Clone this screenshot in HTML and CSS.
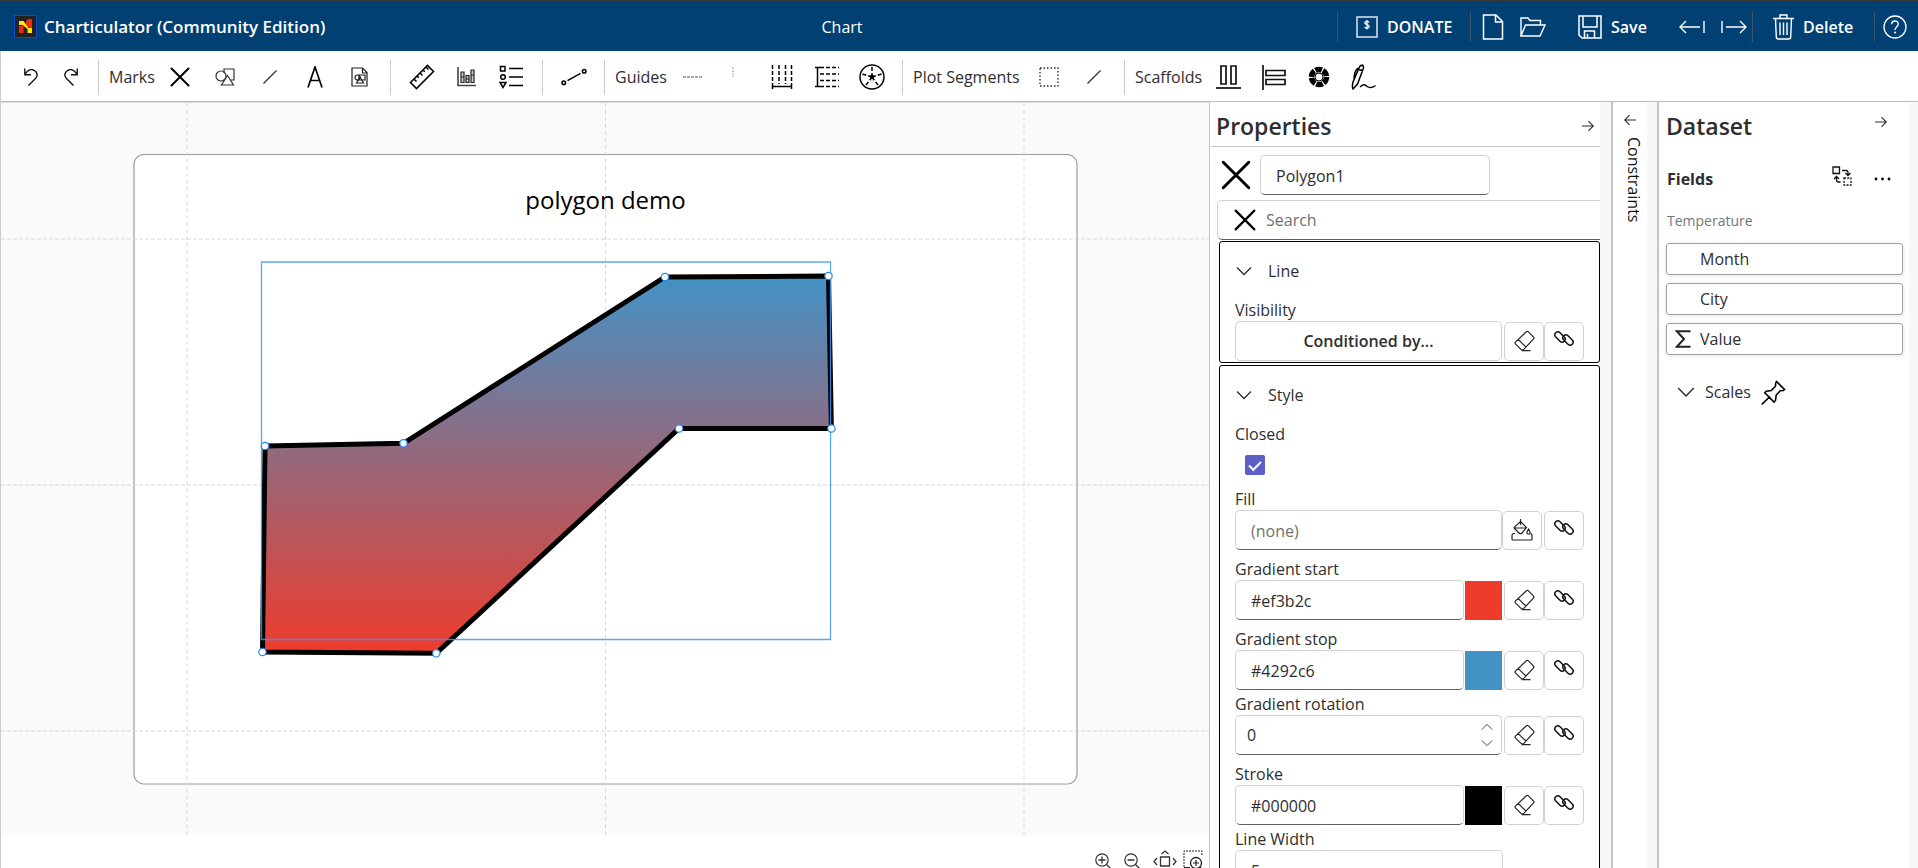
FILE: index.html
```html
<!DOCTYPE html>
<html lang="en">
<head>
<meta charset="utf-8">
<title>Charticulator (Community Edition)</title>
<link rel="stylesheet" href="styles.css">
</head>
<body>
<svg class="sprite" aria-hidden="true">
  <symbol id="cross" viewBox="0 0 20 20"><path d="M1.500 1.500l17 17M18.500 1.500l-17 17" fill="none" stroke="#000" stroke-width="2" stroke-linecap="round"/></symbol>
  <symbol id="chevron" viewBox="0 0 16 16"><path d="M1 4.500l7 7 7-7" fill="none" stroke="currentColor" stroke-width="1.300"/></symbol>
  <symbol id="arrow" viewBox="0 0 12 12"><path d="M0 6h11M6.500 1.200L11.300 6l-4.800 4.800" fill="none" stroke="currentColor" stroke-width="1.100"/></symbol>
  <symbol id="eraser" viewBox="0 0 22 22"><path d="M13.500 1.700a1.200 1.200 0 0 1 1.700 0l5.400 5.400a1.200 1.200 0 0 1 0 1.700L10.800 19.400a2 2 0 0 1-2.800 0l-5.600-5.600a1.200 1.200 0 0 1 0-1.700zM5 9.400l8 7.600M8.500 20.600h9" fill="none" stroke="#242424" stroke-width="1.200"/></symbol>
  <symbol id="bind" viewBox="0 0 22 22"><g fill="none" stroke="#111" stroke-width="1.500"><rect x="1" y="5" width="12" height="6" rx="3" transform="rotate(45 7 8)"/><rect x="9" y="8" width="12" height="6" rx="3" transform="rotate(45 15 11)"/></g></symbol>
  <symbol id="bucket" viewBox="0 0 22 22"><g fill="none" stroke="#222" stroke-width="1.200"><path d="M9.500 0v6M9.500 2.500l6 6-4.500 5.500a2 2 0 0 1-3 0L3.500 9.500a1 1 0 0 1 0-1.400zM3.500 9h12M17.500 10c2 3 2.200 5 0 5s-2-2 0-5z"/><path d="M4 14.500H3a2 2 0 0 0-2 2V20a1 1 0 0 0 1 1h18a1 1 0 0 0 1-1v-3.500a2 2 0 0 0-1.500-1.800"/></g></symbol>
</svg>

<header class="topbar">
  <div class="brand">
    <svg class="logo" viewBox="0 0 23 23"><rect x=".5" y=".5" width="22" height="22" fill="#222" stroke="#1746d1"/><path d="M5 11h4.500v7H5zM13 5l2-1h3v9h-3l-3-3V7z" fill="#f02a10"/><path d="M5 6h4.500l5 7H18v5h-4.500v-4l-5-4H5z" fill="#ffe70a"/></svg>
    <span>Charticulator (Community Edition)</span>
  </div>
  <div class="doc-name">Chart</div>
  <div class="bar-group donate">
    <button class="bar-button"><svg width="22" height="22" viewBox="0 0 22 22"><rect x="1" y="1" width="20" height="20" fill="none" stroke="#dbe6ef" stroke-width="1.500"/><path d="M13 6.300C12 5 8.800 5 8.800 7c0 2.200 4.400 1.200 4.400 3.500 0 2-3.500 2-4.600.6M11 4v9.500" fill="none" stroke="#fff" stroke-width="1.300"/></svg><span>DONATE</span></button>
  </div>
  <div class="bar-group files">
    <button class="bar-button" aria-label="New"><svg width="22" height="26" viewBox="0 0 22 26"><path d="M1.500 1h12.500l6.500 6.500V25h-19zM13.500 1v7h7" fill="none" stroke="#fff" stroke-width="1.500"/></svg></button>
    <button class="bar-button open" aria-label="Open"><svg width="26" height="20" viewBox="0 0 26 20"><path d="M1 19V1h7l2 2.500h10.500V8M1 19L5.500 8H25l-5 11z" fill="none" stroke="#fff" stroke-width="1.400"/></svg></button>
    <button class="bar-button save"><svg width="24" height="24" viewBox="0 0 24 24"><path d="M1 1h22v22H4l-3-3zM5 1v11h14V1M6.500 23v-7h10v7M9.500 19v4" fill="none" stroke="#fff" stroke-width="1.500"/></svg><span>Save</span></button>
    <button class="bar-button" aria-label="Undo"><svg width="26" height="14" viewBox="0 0 26 14"><path d="M25 1v12M21 7H1.500M7 1L1 7l6 6" fill="none" stroke="#fff" stroke-width="1.400"/></svg></button>
    <button class="bar-button redo" aria-label="Redo"><svg width="26" height="14" viewBox="0 0 26 14"><path d="M1 1v12M5 7h19.500M19 1l6 6-6 6" fill="none" stroke="#fff" stroke-width="1.400"/></svg></button>
  </div>
  <div class="bar-group trash">
    <button class="bar-button"><svg width="21" height="26" viewBox="0 0 21 26"><path d="M0 4.500h21M7 4V1h7v3M2.500 5l.8 18a2 2 0 0 0 2 2h10.400a2 2 0 0 0 2-2l.8-18M7 8.500v12.500M10.500 8.500v12.500M14 8.500v12.500" fill="none" stroke="#fff" stroke-width="1.400"/></svg><span>Delete</span></button>
  </div>
  <div class="bar-group help">
    <button class="bar-button" aria-label="Help"><svg width="24" height="24" viewBox="0 0 24 24"><circle cx="12" cy="12" r="11" fill="none" stroke="#fff" stroke-width="1.300"/><path d="M8.700 9.300c0-4.400 6.600-4.300 6.600-.3 0 2.600-3.300 2.800-3.300 6" fill="none" stroke="#fff" stroke-width="1.400"/><circle cx="12" cy="17.500" r="1" fill="#fff"/></svg></button>
  </div>
</header>

<nav class="toolbar">
  <div class="tools history">
    <button aria-label="Undo"><svg width="14" height="18" viewBox="0 0 14 18"><path d="M.8.500v6.200H7M1 6.500C3 3 6 1 9 1.800c4.500 1.400 5.200 6 2.500 8.800L4.500 17.500" fill="none" stroke="#111" stroke-width="1.400"/></svg></button>
    <button aria-label="Redo"><svg width="14" height="18" viewBox="0 0 14 18"><path d="M13.200.500v6.200H7M13 6.500C11 3 8 1 5 1.800.5 3.200-.2 7.800 2.500 10.600l7 6.900" fill="none" stroke="#111" stroke-width="1.400"/></svg></button>
  </div>
  <div class="tools">
    <span class="tool-label marks">Marks</span>
    <button aria-label="Symbol"><svg width="20" height="20"><use href="#cross"/></svg></button>
    <button aria-label="Shape"><svg width="20" height="18" viewBox="0 0 20 18"><g fill="none" stroke="#333" stroke-width="1.200"><path d="M9 5V1h10v11h-3"/><circle cx="6" cy="8" r="5"/><path d="M12.500 7.500L18.500 17h-12z" fill="#fff"/></g></svg></button>
    <button aria-label="Line"><svg width="14" height="14" viewBox="0 0 14 14"><path d="M.5 13.500l13-13" stroke="#333" stroke-width="1.200"/></svg></button>
    <button aria-label="Text"><svg width="16" height="22" viewBox="0 0 16 22"><path d="M1 21.500L8 1l7 20.500M3.500 14.500h9" fill="none" stroke="#000" stroke-width="1.700"/></svg></button>
    <button aria-label="Icon"><svg width="17" height="20" viewBox="0 0 17 20"><g fill="none" stroke="#222" stroke-width="1.200"><path d="M1 1h10.500l4.500 4.500V19H1zM11.500 1v5H16"/><path d="M8 8h6v5H8z"/><circle cx="6.500" cy="10.500" r="2.500"/><path d="M9 10l3.500 6h-7z"/></g></svg></button>
  </div>
  <div class="tools">
    <button aria-label="Ruler"><svg width="26" height="26" viewBox="0 0 26 26"><path d="M1.500 18.500L18.500 1.500l6 6-17 17zM5 15l2.500 2.500M8 12l1.800 1.800M11 9l2.500 2.500M14 6l1.800 1.800M17 3l2.500 2.500" fill="none" stroke="#000" stroke-width="1.600"/></svg></button>
    <button aria-label="Data axis"><svg width="19" height="20" viewBox="0 0 19 20"><path d="M1 0v18.500h18" fill="none" stroke="#444" stroke-width="1.600"/><g fill="#ccc" stroke="#222" stroke-width="1.200"><path d="M4 5h3v10.500H4zM9 8.500h3v7H9zM14 3h3v12.500h-3zM4 10h3M9 12h3M14 8h3"/></g></svg></button>
    <button aria-label="Legend"><svg width="25" height="24" viewBox="0 0 25 24"><g fill="none" stroke="#000" stroke-width="1.500"><path d="M1.500 1.500h4.500v4.500H1.500zM10 3.500h14M10 12h14M10 20.500h14M1 17.500h6l-3 5z"/><circle cx="4" cy="12" r="2.300"/></g></svg></button>
  </div>
  <div class="tools">
    <button aria-label="Link"><svg width="26" height="18" viewBox="0 0 26 18"><g fill="none" stroke="#000" stroke-width="1.500"><circle cx="2.800" cy="14.700" r="1.800"/><circle cx="23.200" cy="3.300" r="1.800"/><path d="M6.500 12.600l13-7.300"/></g></svg></button>
  </div>
  <div class="tools">
    <span class="tool-label guides">Guides</span>
    <button aria-label="Horizontal guide"><svg width="20" height="2" viewBox="0 0 20 2"><path d="M0 1h20" stroke="#555" stroke-dasharray="3 1"/></svg></button>
    <button class="narrow" aria-label="Vertical guide"><svg width="2" height="20" viewBox="0 0 2 20"><path d="M1 0v10" stroke="#999" stroke-dasharray="2 1"/></svg></button>
    <button aria-label="Vertical guides"><svg width="22" height="24" viewBox="0 0 22 24"><path d="M1.500 0v19M8 0v19M14.500 0v19M20.500 0v19" stroke="#000" stroke-width="1.500" stroke-dasharray="4 2"/><path d="M1 21.500h20M1.500 19v5M20.500 19v5" stroke="#000" stroke-width="1.500"/></svg></button>
    <button aria-label="Horizontal guides"><svg width="24" height="22" viewBox="0 0 24 22"><path d="M5 1.500h19M5 8h19M5 14.500h19M5 20.500h19" stroke="#000" stroke-width="1.500" stroke-dasharray="4 2"/><path d="M2.500 1v20M0 1.500h5M0 20.500h5" stroke="#000" stroke-width="1.500"/></svg></button>
    <button aria-label="Polar guides"><svg width="26" height="26" viewBox="0 0 26 26"><circle cx="13" cy="13" r="12" fill="none" stroke="#000" stroke-width="1.500"/><path d="M13 13V1M13 13L1.700 9.500M13 13l11.300-3.500M13 13L6 22.500M13 13l7 9.500" stroke="#000" stroke-width="1.500" stroke-dasharray="4 2"/><circle cx="13" cy="13" r="2.200"/></svg></button>
  </div>
  <div class="tools">
    <span class="tool-label segments">Plot Segments</span>
    <button aria-label="2D region"><svg width="20" height="20" viewBox="0 0 20 20"><rect x="1" y="1" width="18" height="18" fill="none" stroke="#222" stroke-width="1.300" stroke-dasharray="1.500 2"/></svg></button>
    <button aria-label="Line segment"><svg width="14" height="14" viewBox="0 0 14 14"><path d="M.5 13.500l13-13" stroke="#333" stroke-width="1.200"/></svg></button>
  </div>
  <div class="tools">
    <span class="tool-label scaffolds">Scaffolds</span>
    <button aria-label="Horizontal line"><svg width="25" height="24" viewBox="0 0 25 24"><path d="M0 23h25" stroke="#000" stroke-width="1.600"/><path d="M5 1h5v18H5zM15 1h5v18h-5z" fill="#fff" stroke="#111" stroke-width="1.700"/></svg></button>
    <button aria-label="Vertical line"><svg width="24" height="25" viewBox="0 0 24 25"><path d="M1 0v25" stroke="#000" stroke-width="1.600"/><path d="M4 5.500h19v5H4zM4 14.500h19v5H4z" fill="#fff" stroke="#111" stroke-width="1.700"/></svg></button>
    <button aria-label="Polar"><svg width="22" height="22" viewBox="0 0 22 22"><circle cx="11" cy="11" r="7.500" fill="none" stroke="#000" stroke-width="5.500" stroke-dasharray="6.700 1.150"/><circle cx="11" cy="11" r="4" fill="none" stroke="#000"/></svg></button>
    <button aria-label="Custom curve"><svg width="26" height="26" viewBox="0 0 26 26"><path d="M2 25c-1-2-.500-5 0-7L8.500 3c1-2.500 4.500-2 4 1L6.500 20zM3 16c0-4 1-10 4.500-12M7 5l5 2M11 2l1-1.500M9 23c3-3 5-3 7-.500 3 2 5 1.500 8.500-1" fill="none" stroke="#000" stroke-width="1.500"/></svg></button>
  </div>
</nav>

<main class="workspace">
  <section class="stage">
    <svg class="canvas" viewBox="1 103 1208 732">
      <defs><linearGradient id="fade" x1="0" y1="1" x2="0" y2="0"><stop offset="0" stop-color="#ef3b2c"/><stop offset="1" stop-color="#4292c6"/></linearGradient></defs>
      <rect x="134" y="154.500" width="943" height="629.500" rx="10" fill="#fff" stroke="#9b9b9b" stroke-width="1.200"/>
      <path d="M187 103v732M605.500 103v732M1024 103v732" stroke="#d8d8d8" stroke-dasharray="4 3"/>
      <path d="M1 239h1208M1 485h1208M1 731h1208" stroke="#d8d8d8" stroke-dasharray="4 2"/>
      <text class="chart-title" x="605.500" y="209">polygon demo</text>
      <path d="M265 446L403.500 443.300 665 277 828.500 276 831.400 428.500H679L436.300 653.300 262.500 652z" fill="url(#fade)" stroke="#000" stroke-width="5"/>
      <path d="M261.500 262h569v377.500h-569z" fill="none" stroke="#3d95fb" stroke-opacity=".85" stroke-width="1.300"/>
      <g fill="#fff" stroke="#1f86f7" stroke-width="1.200"><circle cx="265" cy="446" r="3.700"/><circle cx="403.500" cy="443.300" r="3.700"/><circle cx="665" cy="277" r="3.700"/><circle cx="828.500" cy="276" r="3.700"/><circle cx="831.400" cy="428.500" r="3.700"/><circle cx="679" cy="428.500" r="3.700"/><circle cx="436.300" cy="653.300" r="3.700"/><circle cx="262.500" cy="652" r="3.700"/></g>
    </svg>
    <div class="zoombar">
      <button aria-label="Zoom in"><svg width="17" height="17" viewBox="0 0 17 17"><path d="M11 11l5 5M3.500 7h7M7 3.500v7" stroke="#333" stroke-width="1.300"/><circle cx="7" cy="7" r="6.200" fill="none" stroke="#333" stroke-width="1.200"/></svg></button>
      <button aria-label="Zoom out"><svg width="17" height="17" viewBox="0 0 17 17"><path d="M11 11l5 5M3.500 7h7" stroke="#333" stroke-width="1.300"/><circle cx="7" cy="7" r="6.200" fill="none" stroke="#333" stroke-width="1.200"/></svg></button>
      <button aria-label="Fit to window"><svg width="24" height="22" viewBox="0 0 24 22"><path d="M7.500 7h9v9h-9zM4 8l-3 3.500L4 15M20 8l3 3.500L20 15M8.500 4L12 1l3.500 3M8.500 18.500l3.500 3 3.500-3" fill="none" stroke="#333" stroke-width="1.300"/></svg></button>
      <button class="zoom-area" aria-label="Zoom to selection"><svg width="20" height="22" viewBox="0 0 20 22"><path d="M1 17V1h18v5" fill="none" stroke="#222" stroke-dasharray="2 1"/><circle cx="13" cy="13" r="5.500" fill="none" stroke="#222" stroke-width="1.300"/><path d="M10 13h6M13 10v6M17 17l3 3M1 17.500h6" stroke="#222" stroke-width="1.200"/></svg></button>
    </div>
  </section>

  <aside class="properties">
    <div class="panel-head ruled"><h2>Properties</h2><button class="collapse" aria-label="Collapse properties"><svg width="12" height="12"><use href="#arrow"/></svg></button></div>
    <div class="object-row"><svg width="30" height="30"><use href="#cross"/></svg><input class="field" type="text" value="Polygon1" aria-label="Object name"></div>
    <div class="field search"><svg width="22" height="22"><use href="#cross"/></svg><input type="text" placeholder="Search" aria-label="Search"></div>

    <section class="group first">
      <button class="group-head"><svg width="16" height="16"><use href="#chevron"/></svg>Line</button>
      <div class="prop"><span class="caption">Visibility</span>
        <div class="row"><button class="field condition">Conditioned by...</button><button class="square" aria-label="Clear visibility"><svg><use href="#eraser"/></svg></button><button class="square bound" aria-label="Bind visibility"><svg><use href="#bind"/></svg></button></div></div>
    </section>

    <section class="group">
      <button class="group-head"><svg width="16" height="16"><use href="#chevron"/></svg>Style</button>
      <div class="prop"><label class="caption" for="closed">Closed</label><input id="closed" class="tick" type="checkbox" checked></div>
      <div class="prop spaced"><label class="caption" for="fill">Fill</label>
        <div class="row"><input id="fill" class="field" type="text" placeholder="(none)"><button class="square paint" aria-label="Pick fill"><svg><use href="#bucket"/></svg></button><button class="square bound" aria-label="Bind fill"><svg><use href="#bind"/></svg></button></div></div>
      <div class="prop spaced"><label class="caption" for="gstart">Gradient start</label>
        <div class="row"><input id="gstart" class="field" type="text" value="#ef3b2c"><button class="swatch red" aria-label="Pick gradient start"></button><button class="square" aria-label="Clear gradient start"><svg><use href="#eraser"/></svg></button><button class="square bound" aria-label="Bind gradient start"><svg><use href="#bind"/></svg></button></div></div>
      <div class="prop"><label class="caption" for="gstop">Gradient stop</label>
        <div class="row"><input id="gstop" class="field" type="text" value="#4292c6"><button class="swatch blue" aria-label="Pick gradient stop"></button><button class="square" aria-label="Clear gradient stop"><svg><use href="#eraser"/></svg></button><button class="square bound" aria-label="Bind gradient stop"><svg><use href="#bind"/></svg></button></div></div>
      <div class="prop spaced"><label class="caption" for="grot">Gradient rotation</label>
        <div class="row"><div class="field number"><input id="grot" type="text" value="0"><span class="steps"><button class="up" aria-label="Increase"><svg width="12" height="12"><use href="#chevron"/></svg></button><button aria-label="Decrease"><svg width="12" height="12"><use href="#chevron"/></svg></button></span></div><button class="square" aria-label="Clear gradient rotation"><svg><use href="#eraser"/></svg></button><button class="square bound" aria-label="Bind gradient rotation"><svg><use href="#bind"/></svg></button></div></div>
      <div class="prop"><label class="caption" for="stroke">Stroke</label>
        <div class="row"><input id="stroke" class="field" type="text" value="#000000"><button class="swatch black" aria-label="Pick stroke"></button><button class="square" aria-label="Clear stroke"><svg><use href="#eraser"/></svg></button><button class="square bound" aria-label="Bind stroke"><svg><use href="#bind"/></svg></button></div></div>
      <div class="prop"><label class="caption" for="lwidth">Line Width</label>
        <div class="row short"><input id="lwidth" class="field" type="text" value="5"></div></div>
    </section>
  </aside>

  <aside class="constraints">
    <button class="collapse" aria-label="Expand constraints"><svg class="flip" width="12" height="12"><use href="#arrow"/></svg></button>
    <span class="upright">Constraints</span>
  </aside>

  <aside class="dataset">
    <div class="panel-head"><h2>Dataset</h2><button class="collapse" aria-label="Collapse dataset"><svg width="12" height="12"><use href="#arrow"/></svg></button></div>
    <div class="fields-head"><h3>Fields</h3>
      <button class="swap" aria-label="Replace data"><svg width="20" height="20" viewBox="0 0 20 20"><g fill="none" stroke="#111" stroke-width="1.300"><path d="M1 1h6.500v6.500H1z"/><path d="M12 12h7v7h-7z" stroke-dasharray="2 1.300"/><path d="M10 4.500h4a2 2 0 0 1 2 2V9M13.500 7L16 9.500 18.500 7M8.500 16H6.500a2 2 0 0 1-2-2v-3M2 13l2.500-2.500L7 13"/></g></svg></button>
      <button aria-label="More"><svg width="17" height="4" viewBox="0 0 17 4"><circle cx="2" cy="2" r="1.400"/><circle cx="8.500" cy="2" r="1.400"/><circle cx="15" cy="2" r="1.400"/></svg></button></div>
    <p class="table-name">Temperature</p>
    <ul class="columns">
      <li><button><span class="kind"></span>Month</button></li>
      <li><button><span class="kind"></span>City</button></li>
      <li><button><span class="kind"><svg width="16" height="18" viewBox="0 0 16 18"><path d="M15.500 1.200H1.800L9 9l-7.200 7.800h13.700" fill="none" stroke="#222" stroke-width="2"/></svg></span>Value</button></li>
    </ul>
    <button class="scales"><svg width="18" height="18"><use href="#chevron"/></svg><span>Scales</span><svg width="25" height="25" viewBox="0 0 25 25"><path d="M15.500 1.500l8 8-1.300 1-3 .3-4 4.200-.7 5.500-1.500 1.500L3.800 12.800l1.500-1.500 5-.8 4.200-4.300.2-3.200zM9 16.500L.8 24.300" fill="none" stroke="#000" stroke-width="1.600"/></svg></button>
  </aside>
</main>
</body>
</html>
```
FILE: styles.css
```css
* { box-sizing: border-box; }

body {
  margin: 0;
  height: 100vh;
  display: flex;
  flex-direction: column;
  overflow: hidden;
  background: #fff;
  color: #2e2e2e;
  font: 16px/22px "Open Sans", "Noto Sans", sans-serif;
}

button, input { font: inherit; color: inherit; }
button { padding: 0; border: 0; background: none; }
h2, h3, p, ul { margin: 0; padding: 0; }
ul { list-style: none; }
svg { display: block; flex: none; }
.sprite { display: none; }

/* Top bar */
.topbar {
  flex: none;
  height: 51px;
  display: flex;
  align-items: center;
  padding: 1px 11px 0 0;
  border-top: 1px solid #3a3a3a;
  background: #004073;
  color: #fff;
}
.brand {
  width: 347px;
  display: flex;
  align-items: center;
  gap: 7px;
  padding-left: 14px;
  font-size: 17px;
  font-weight: 600;
  white-space: nowrap;
}
.logo { width: 23px; height: 23px; }
.doc-name { flex: 1; text-align: center; }
.bar-group {
  height: 30px;
  display: flex;
  align-items: center;
  border-left: 1px solid #3f5468;
}
.bar-button { display: flex; align-items: center; gap: 9px; font-weight: 600; }
.donate { width: 133px; padding-left: 18px; }
.files { width: 282px; padding-left: 11px; gap: 16px; }
.open { margin-right: 16px; }
.save { margin-right: 16px; }
.trash { width: 122px; padding-left: 20px; }
.help { padding-left: 8px; }

/* Toolbar */
.toolbar {
  flex: none;
  height: 51px;
  display: flex;
  align-items: center;
  padding-top: 2px;
  border-left: 1px solid #ccc;
  border-bottom: 1px solid #bbb;
}
.tools {
  height: 35px;
  display: flex;
  align-items: center;
  padding: 0 8px;
  border-right: 1px solid #ccc;
}
.tools:last-child { border-right: 0; }
.tools button { width: 45px; height: 35px; display: grid; place-items: center; }
.tools.history { padding: 0 7px 0 10px; }
.tools.history button { width: 40px; }
.tools .narrow { width: 44px; padding-right: 8px; }
.tool-label { margin-left: 2px; white-space: nowrap; }
.marks { width: 48px; }
.guides { width: 55px; }
.segments { width: 113px; }
.scaffolds { width: 71px; }

/* Workspace */
.workspace { flex: 1; min-height: 0; display: flex; }
.stage {
  flex: 1;
  min-width: 0;
  display: flex;
  flex-direction: column;
  border-left: 1px solid #ccc;
  border-top: 1px solid #ddd;
}
.canvas { flex: 1; min-height: 0; width: 100%; background: #fafafa; }
.chart-title { font-size: 24px; text-anchor: middle; fill: #000; }
.zoombar {
  flex: none;
  height: 33px;
  display: flex;
  justify-content: flex-end;
  align-items: flex-start;
  gap: 12px;
  padding: 15px 6px 0 0;
}
.zoombar button { height: 22px; display: flex; align-items: center; }
.zoombar .zoom-area { margin-left: -6px; }

.panel-head { height: 44px; display: flex; align-items: center; justify-content: space-between; }
h2 { font-size: 23px; line-height: 32px; font-weight: 600; }
.collapse { width: 24px; height: 24px; display: grid; place-items: center; }

/* Properties */
.properties {
  flex: none;
  width: 402px;
  overflow: hidden auto;
  scrollbar-width: none;
  border-left: 1px solid #c4c4c4;
  border-right: 11px solid #f8f8f8;
}
.ruled { margin-left: 1px; padding: 4px 0 0 5px; height: 45px; border-bottom: 1px solid #c8c8c8; }
.object-row { display: flex; align-items: center; gap: 9px; padding: 8px 0 0 11px; }
.object-row .field { flex: none; width: 230px; }
.field {
  flex: 1;
  min-width: 0;
  height: 40px;
  padding: 2px 15px 0;
  border: 1px solid #d1d1d1;
  border-bottom-color: #616161;
  border-radius: 5px;
  background: #fff;
}
.field::placeholder, .search input::placeholder { color: #707070; opacity: 1; }
.search {
  height: 40px;
  margin: 5px -6px 0 7px;
  display: flex;
  align-items: center;
  gap: 10px;
  padding: 0 16px;
}
.search input, .number input { flex: 1; min-width: 0; padding: 0; border: 0; background: none; outline: 0; }

.group { margin: 2px 0 0 9px; padding: 0 15px 0 15px; border: 1px solid #000; border-radius: 3px; }
.group.first { margin-top: 1px; }
.group-head { height: 57px; display: flex; align-items: center; gap: 16px; padding-left: 1px; }
.prop { padding-bottom: 3px; }
.first .prop { padding-bottom: 1px; }
.prop.spaced { padding-bottom: 8px; }
.caption { display: block; height: 22px; line-height: 22px; }
.row { display: flex; align-items: center; }
.short { padding-right: 81px; }
.field.condition { border-color: #d1d1d1; padding: 0; font-weight: 600; margin-right: 2px; }
.square { flex: none; width: 40px; height: 39px; display: grid; place-items: center; border: 1px solid #d1d1d1; border-radius: 5px; }
.square svg { width: 22px; height: 22px; }
.bound { padding-bottom: 3px; }
.paint { margin-right: 2px; }
.swatch { flex: none; width: 37px; height: 39px; margin: 0 2px 0 1px; }
.number + .square { margin-left: 2px; }
.red { background: #ef3b2c; }
.blue { background: #4292c6; }
.black { background: #000; }
.number { display: flex; align-items: center; padding: 0 8px 0 11px; }
.steps { display: flex; flex-direction: column; gap: 4px; color: #424242; }
.up svg { transform: rotate(180deg); }
.tick {
  display: grid;
  place-items: center;
  appearance: none;
  width: 20px;
  height: 20px;
  margin: 10px;
  border-radius: 2px;
  background: #5b5fc7;
}
.tick::after {
  content: "";
  width: 10px;
  height: 5px;
  border: solid #fff;
  border-width: 0 0 2px 2px;
  transform: translateY(-1px) rotate(-45deg);
}

/* Constraints */
.constraints {
  flex: none;
  width: 46px;
  padding: 6px 0 0 5px;
  border-left: 2px solid #c4c4c4;
  border-right: 10px solid #f8f8f8;
}
.flip { transform: scaleX(-1); }
.upright { display: block; margin: 5px 0 0 5px; writing-mode: vertical-rl; color: #111; }

/* Dataset */
.dataset {
  flex: none;
  width: 261px;
  padding: 2px 6px 0 7px;
  border-left: 2px solid #c4c4c4;
  border-right: 9px solid #f8f8f8;
}
.dataset .collapse { margin: 0 10px 8px 0; }
.fields-head { height: 62px; display: flex; align-items: center; gap: 22px; padding: 0 12px 0 1px; }
.swap { padding-bottom: 6px; }
h3 { flex: 1; font-size: 16px; font-weight: 700; }
.table-name { padding: 0 1px; margin-bottom: 11px; font-size: 14px; color: #757575; }
.columns { display: grid; gap: 8px; }
.columns button {
  width: 100%;
  height: 32px;
  display: flex;
  align-items: center;
  gap: 9px;
  padding-left: 8px;
  border: 1px solid #a0a0a0;
  border-radius: 3px;
  box-shadow: 0 1px 5px #0000001a;
}
.kind { width: 16px; }
.scales { margin-top: 24px; height: 26px; display: flex; align-items: center; gap: 10px; padding-left: 11px; }
```
